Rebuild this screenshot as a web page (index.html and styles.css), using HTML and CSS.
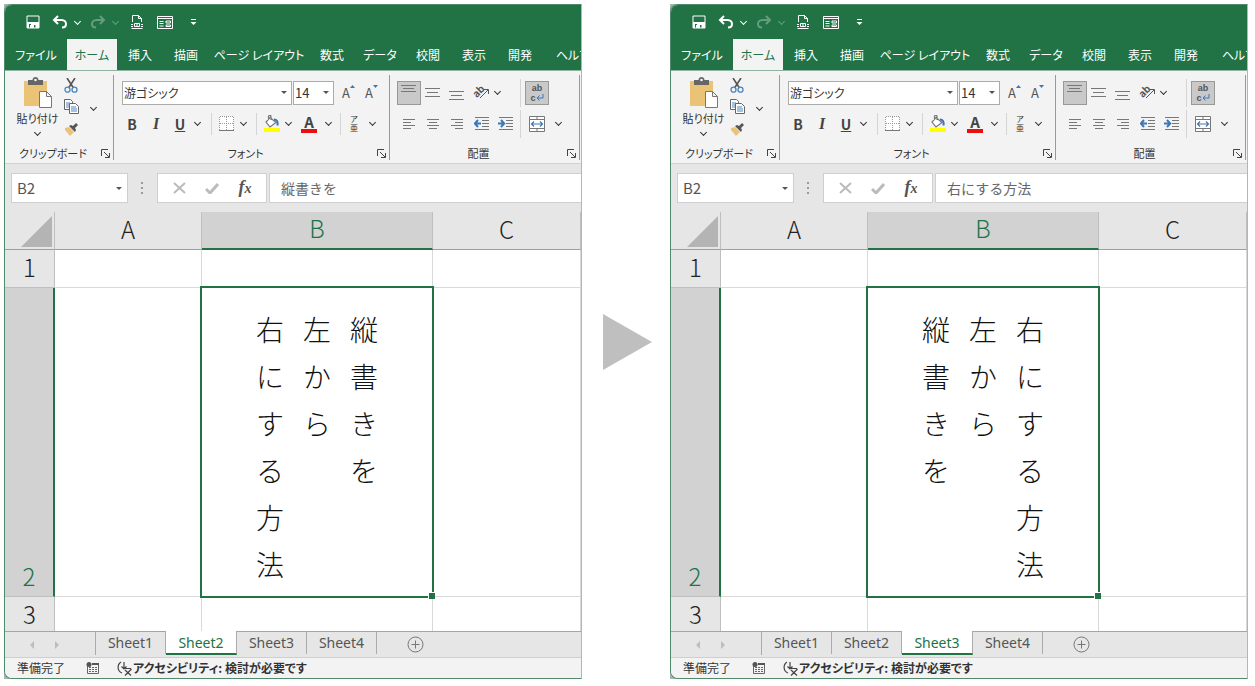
FILE: index.html
```
<!DOCTYPE html>
<html lang="ja">
<head>
    <meta charset="UTF-8">
    <title>縦書きを左から右にする方法</title>
    <link rel="stylesheet" href="styles.css">
</head>
<body>
    <main class="compare">
        <section class="shot" data-sheet="Sheet2" data-lines="縦書きを,左から,右にする方法"></section>
        <svg class="arrow" viewBox="0 0 50 56"><path d="M1 0L50 28L1 56z"/></svg>
        <section class="shot" data-sheet="Sheet3" data-lines="右にする方法,左から,縦書きを"></section>
    </main>

    <template id="excel">
        <div class="window">
            <header class="title-bar">
                <button class="icon-btn" aria-label="上書き保存"><svg width="14" height="14" viewBox="0 0 14 14"><path class="w" d="M1 1h12v12H1z"/><path class="wf" d="M1 7h12v6H9.500v-3H8v3H4v-3h1V9H3v4H1z"/></svg></button>
                <button class="icon-btn undo" aria-label="元に戻す"><svg width="16" height="14" viewBox="0 0 16 14"><path class="w bold" d="M6 1L2 5l4 4M2 5h7.500c3 0 4.500 2 4.500 4 0 2-1.500 3.500-4 3.500"/></svg></button>
                <button class="chev light" aria-label="元に戻すの一覧"></button>
                <button class="icon-btn redo dim" aria-label="やり直し"><svg width="16" height="14" viewBox="0 0 16 14"><path class="w bold" d="M10 1l4 4-4 4M14 5H6.500C3.500 5 2 7 2 9c0 2 1.500 3.500 4 3.500"/></svg></button>
                <button class="chev light dim" aria-label="やり直しの一覧"></button>
                <button class="icon-btn" aria-label="印刷プレビュー"><svg width="14" height="16" viewBox="0 0 14 16"><path class="w" d="M2.500 8V1.500h6l3 3V8M8.500 1.500v3h3M1.500 14.500h11"/><path class="w" d="M1 10.500h2M11 10.500h2M4.500 9.500h5v3h-5z"/><path class="wf" d="M1 12h2v1H1zM11 12h2v1h-2zM6 10.500h2v1H6z"/></svg></button>
                <button class="icon-btn" aria-label="フォーム"><svg width="16" height="13" viewBox="0 0 16 13"><path class="w" d="M.5.5h15v12H.5zM.5 2.500h15M2.500 5.500h4M2.500 7.500h4M2.500 10h4M9 5h4.500v2H9zM9 9h4.500v1.500H9z"/></svg></button>
                <button class="icon-btn" aria-label="クイック アクセスのカスタマイズ"><svg width="7" height="7" viewBox="0 0 7 7"><path class="wf" d="M1 0h5v1H1zM.5 3h6l-3 3z"/></svg></button>
            </header>

            <nav class="ribbon-tabs">
                <a href="#">ファイル</a>
                <a href="#" class="active">ホーム</a>
                <a href="#">挿入</a>
                <a href="#">描画</a>
                <a href="#">ページ レイアウト</a>
                <a href="#">数式</a>
                <a href="#">データ</a>
                <a href="#">校閲</a>
                <a href="#">表示</a>
                <a href="#">開発</a>
                <a href="#">ヘルプ</a>
            </nav>

            <div class="ribbon">
                <div class="group clipboard">
                    <div class="tools">
                        <button class="paste">
                            <svg width="28" height="32" viewBox="0 0 28 32"><path fill="#eac377" d="M0 4h23v25H0z"/><path fill="#666" d="M4 3h4.500c0-4 6-4 6 0H19v5H4z"/><circle cx="11.500" cy="3" r="1.300" fill="#f3f3f3"/><path fill="#fff" stroke="#777" d="M15.500 14.500h7l5 5v11h-12zM22.500 14.500v5h5"/></svg>
                            <span>貼り付け</span>
                            <i class="chev"></i>
                        </button>
                        <div class="clip-list">
                            <button class="icon-btn" aria-label="切り取り"><svg width="14" height="15" viewBox="0 0 14 15"><path fill="none" stroke="#555" stroke-width="1.600" d="M3 0l6.500 10M11 0L4.500 10"/><circle cx="3.500" cy="11.700" r="2.500" fill="none" stroke="#4a86bd" stroke-width="1.300"/><circle cx="10.500" cy="11.700" r="2.500" fill="none" stroke="#4a86bd" stroke-width="1.300"/></svg></button>
                            <button class="icon-btn" aria-label="コピー"><svg width="15" height="16" viewBox="0 0 15 16"><path fill="#fff" stroke="#666" d="M.5.5h6l2 2v8h-8z"/><path stroke="#4a86bd" d="M2 4h4M2 6h4M2 8h4"/><path fill="#fff" stroke="#666" d="M5.500 4.500h6l3 3v7h-9z"/><path stroke="#4a86bd" d="M7 8h5M7 10h6M7 12h6"/></svg></button>
                            <button class="icon-btn" aria-label="書式のコピー"><svg width="15" height="13" viewBox="0 0 15 13"><path fill="#eac377" d="M1 5l4-1 5 5-4 4-5-6z"/><path fill="#555" d="M5 3l2-1 2 1 3-3 2 2-3 3 1 2-1 2z"/></svg></button>
                        </div>
                        <button class="chev" aria-label="コピーのオプション"></button>
                    </div>
                    <div class="caption"><span>クリップボード</span><button class="launcher" aria-label="クリップボードの詳細"><svg width="9" height="9" viewBox="0 0 9 9"><path d="M.5 7V.5H7M3 3l5 5M8.500 4v4.500H4"/></svg></button></div>
                </div>

                <div class="group font">
                    <div class="tools">
                        <div class="row">
                            <span class="combo family"><select aria-label="フォント"><option>游ゴシック</option></select></span>
                            <span class="combo size"><select aria-label="フォント サイズ"><option>14</option></select></span>
                            <button class="resize first" aria-label="フォント サイズの拡大">A<svg width="5" height="3" viewBox="0 0 5 3"><path d="M0 3h5L2.500 0z"/></svg></button>
                            <button class="resize" aria-label="フォント サイズの縮小">A<svg width="5" height="3" viewBox="0 0 5 3"><path d="M0 0h5L2.500 3z"/></svg></button>
                        </div>
                        <div class="row styles">
                            <button class="letter"><b>B</b></button>
                            <button class="letter serif"><i>I</i></button>
                            <button class="letter"><b><u>U</u></b></button>
                            <button class="chev" aria-label="下線"></button>
                            <i class="line"></i>
                            <button class="icon-btn" aria-label="罫線"><svg width="15" height="15" viewBox="0 0 15 15"><path fill="#fff" stroke="#999" stroke-dasharray="1 1" d="M.5 14V.5h14V14M7.500 1v13M1 7.500h13"/><path stroke="#777" d="M0 14.500h15"/></svg></button>
                            <button class="chev" aria-label="罫線の種類"></button>
                            <i class="line"></i>
                            <button class="icon-btn" aria-label="塗りつぶしの色"><svg width="17" height="17" viewBox="0 0 17 17"><path fill="#fff" stroke="#777" stroke-width="1.200" d="M7 2.500l6 5-6 4.500-4-5zM5.500 5V1.500c0-1.500 2.500-1.500 2.500 0V5"/><path fill="none" stroke="#3c76b5" stroke-width="2" d="M11 4.500c3 0 4 2 3.500 6"/><path fill="#ffff00" d="M1 13h16v4H1z"/></svg></button>
                            <button class="chev" aria-label="塗りつぶしの色の一覧"></button>
                            <button class="letter color" aria-label="フォントの色"><b>A</b></button>
                            <button class="chev" aria-label="フォントの色の一覧"></button>
                            <i class="line"></i>
                            <button class="ruby"><span>ア</span><span>亜</span></button>
                            <button class="chev" aria-label="ふりがな"></button>
                        </div>
                    </div>
                    <div class="caption"><span>フォント</span><button class="launcher" aria-label="フォントの詳細"><svg width="9" height="9" viewBox="0 0 9 9"><path d="M.5 7V.5H7M3 3l5 5M8.500 4v4.500H4"/></svg></button></div>
                </div>

                <div class="group align">
                    <div class="tools">
                        <div class="row">
                            <button class="icon-btn pressed high" aria-label="上揃え"><svg width="16" height="16" viewBox="0 0 16 16"><path class="g" d="M0 .5h15M2 3.500h11M0 6.500h15"/></svg></button>
                            <button class="icon-btn" aria-label="上下中央揃え"><svg width="16" height="16" viewBox="0 0 16 16"><path class="g" d="M0 3.500h15M2 7.500h11M0 11.500h15"/></svg></button>
                            <button class="icon-btn" aria-label="下揃え"><svg width="16" height="16" viewBox="0 0 16 16"><path class="g" d="M0 6.500h15M2 10.500h11M0 14.500h15"/></svg></button>
                            <button class="orient" aria-label="方向"><span>ab</span><svg width="12" height="12" viewBox="0 0 12 12"><path d="M2 11l8-8M6 2.500h4.500V7"/></svg></button>
                            <button class="chev" aria-label="方向の一覧"></button>
                            <i class="line"></i>
                            <button class="wrap pressed"><span>ab</span><span>c<svg width="8" height="7" viewBox="0 0 8 7"><path d="M7 0v4H1M3.500 1.500L1 4l2.500 2.500"/></svg></span></button>
                        </div>
                        <div class="row">
                            <button class="icon-btn" aria-label="左揃え"><svg width="12" height="10" viewBox="0 0 12 10"><path class="g" d="M0 .5h12M0 3.500h8M0 6.500h12M0 9.500h8"/></svg></button>
                            <button class="icon-btn" aria-label="中央揃え"><svg width="12" height="10" viewBox="0 0 12 10"><path class="g" d="M0 .5h12M2 3.500h8M0 6.500h12M2 9.500h8"/></svg></button>
                            <button class="icon-btn" aria-label="右揃え"><svg width="12" height="10" viewBox="0 0 12 10"><path class="g" d="M0 .5h12M4 3.500h8M0 6.500h12M4 9.500h8"/></svg></button>
                            <button class="icon-btn" aria-label="インデントを減らす"><svg width="15" height="13" viewBox="0 0 15 13"><path class="g" d="M1 .5h14M8 3.500h7M8 6.500h7M8 9.500h7M1 12.500h14"/><path class="blue" d="M7 6.500H1M4 3L.8 6.500 4 10"/></svg></button>
                            <button class="icon-btn" aria-label="インデントを増やす"><svg width="15" height="13" viewBox="0 0 15 13"><path class="g" d="M1 .5h14M8 3.500h7M8 6.500h7M8 9.500h7M1 12.500h14"/><path class="blue" d="M0 6.500h6M3 3l3.200 3.500L3 10"/></svg></button>
                            <i class="line"></i>
                            <button class="icon-btn" aria-label="セルを結合して中央揃え"><svg width="16" height="16" viewBox="0 0 16 16"><path fill="#fff" stroke="#777" d="M.5.5h15v15H.5zM.5 3.500h15M.5 12.500h15M8 .5v3M8 12.500v3"/><path fill="none" stroke="#3c76b5" stroke-width="1.200" d="M2.500 8h11M5 5.500L2.500 8 5 10.500M11 5.500L13.500 8 11 10.500"/></svg></button>
                            <button class="chev" aria-label="結合の種類"></button>
                        </div>
                    </div>
                    <div class="caption"><span>配置</span><button class="launcher" aria-label="配置の詳細"><svg width="9" height="9" viewBox="0 0 9 9"><path d="M.5 7V.5H7M3 3l5 5M8.500 4v4.500H4"/></svg></button></div>
                </div>
            </div>

            <div class="formula-bar">
                <span class="combo name-box"><select aria-label="名前ボックス"><option>B2</option></select></span>
                <svg class="dots" width="2" height="12" viewBox="0 0 2 12"><path d="M0 0h2v2H0zM0 5h2v2H0zM0 10h2v2H0z"/></svg>
                <div class="fx">
                    <button class="icon-btn" aria-label="キャンセル"><svg width="13" height="12" viewBox="0 0 13 12"><path class="off" d="M1 1l11 10M12 1L1 11"/></svg></button>
                    <button class="icon-btn" aria-label="入力"><svg width="14" height="11" viewBox="0 0 14 11"><path class="off thick" d="M1 6l4 4 8-9"/></svg></button>
                    <button class="fx-btn"><i>f<small>x</small></i></button>
                </div>
                <input class="formula" type="text" aria-label="数式バー">
            </div>

            <table class="grid">
                <colgroup><col class="c-head"><col class="c-a"><col class="c-b"><col></colgroup>
                <tr class="letters">
                    <th class="corner"><svg width="31" height="31" viewBox="0 0 31 31"><path d="M31 0v31H0z"/></svg></th>
                    <th>A</th><th class="on">B</th><th>C</th>
                </tr>
                <tr class="r1"><th>1</th><td></td><td></td><td></td></tr>
                <tr class="r2"><th class="on">2</th><td></td><td class="selected"><div class="stack"></div></td><td></td></tr>
                <tr class="r3"><th>3</th><td></td><td></td><td></td></tr>
            </table>

            <div class="sheet-bar">
                <button class="move" aria-label="前のシート"><svg width="4" height="8" viewBox="0 0 4 8"><path d="M4 0v8L0 4z"/></svg></button>
                <button class="move" aria-label="次のシート"><svg width="4" height="8" viewBox="0 0 4 8"><path d="M0 0v8l4-4z"/></svg></button>
                <div class="sheets">
                    <button>Sheet1</button>
                    <button>Sheet2</button>
                    <button>Sheet3</button>
                    <button>Sheet4</button>
                </div>
                <button class="add" aria-label="新しいシート"><svg width="17" height="17" viewBox="0 0 17 17"><circle cx="8.500" cy="8.500" r="7.500"/><path d="M8.500 4.500v8M4.500 8.500h8"/></svg></button>
            </div>

            <footer class="status-bar">
                <span>準備完了</span>
                <svg class="macro" width="13" height="12" viewBox="0 0 13 12"><path fill="none" stroke="#666" d="M1.500 4v7.500h11v-9H6"/><circle cx="3" cy="2.500" r="2.500" fill="#555"/><path fill="#555" d="M6 1h7v2H6z"/><path stroke="#666" stroke-dasharray="2 1" d="M3 5.500h8M3 7.500h8M3 9.500h8"/></svg>
                <button class="access"><svg width="16" height="15" viewBox="0 0 16 15"><path fill="none" stroke="#444" stroke-width="1.200" d="M4 1C0 3.500 0 10 5 12M7 1v7M4.500 5.500L7 8l2.500-2.500M8 7.500h6M8 9l6 5.500M14.500 8L8 14.500"/></svg>アクセシビリティ: 検討が必要です</button>
            </footer>
        </div>
    </template>

    <script>
        const template = document.getElementById('excel');

        document.querySelectorAll('.shot').forEach(shot => {
            const lines = shot.dataset.lines.split(',');
            shot.appendChild(template.content.cloneNode(true));
            shot.querySelector('.formula').value = lines[0];

            // 1行ずつ縦に積んで右から並べる
            lines.forEach(line => {
                const p = document.createElement('p');
                p.textContent = line;
                shot.querySelector('.stack').appendChild(p);
            });

            shot.querySelectorAll('.sheets button').forEach(btn => {
                btn.classList.toggle('active', btn.textContent === shot.dataset.sheet);
            });
        });
    </script>
</body>
</html>
```
FILE: styles.css
```
* {
    box-sizing: border-box;
}

body {
    margin: 0;
    padding: 4px 7px 7px 4px;
    background: #fff;
    color: #333;
    font-family: "Noto Sans CJK JP", sans-serif;
    font-size: 12px;
    line-height: 16px;
    font-feature-settings: "palt";
}

button, select, input {
    margin: 0;
    padding: 0;
    border: none;
    background: none;
    color: inherit;
    font: inherit;
    font-feature-settings: inherit;
}

svg {
    display: block;
    flex: none;
}

.compare {
    display: grid;
    grid-template-columns: 1fr 88px 1fr;
    align-items: center;
}

.arrow {
    width: 50px;
    height: 56px;
    margin-left: 20px;
    fill: #bfbfbf;
}

.shot {
    min-width: 0;
    background: #a5b5ae;
}

.window {
    overflow: hidden;
    border: 1px solid #4f8a6b;
    border-right-color: #b5b5b5;
    border-radius: 8px 0 0 8px;
    background: #e6e6e6;
}

.icon-btn {
    display: flex;
    align-items: center;
    justify-content: center;
    width: 24px;
    height: 24px;
}

.chev {
    display: flex;
    align-items: center;
    justify-content: center;
    width: 12px;
    height: 24px;
}

.chev::before {
    content: "";
    flex: none;
    width: 4px;
    height: 4px;
    margin-top: -2px;
    border: solid #333;
    border-width: 0 1px 1px 0;
    transform: rotate(45deg);
}

.light::before {
    border-color: #fff;
}

.dim {
    opacity: 0.3;
}

/* タイトルバー */
.title-bar {
    display: flex;
    align-items: center;
    height: 34px;
    padding-left: 14px;
    background: #217346;
}

.title-bar .icon-btn {
    width: 28px;
}

.title-bar .undo {
    width: 26px;
}

.title-bar .redo {
    margin-left: 4px;
    width: 26px;
}

.title-bar .chev {
    width: 8px;
}

.title-bar .chev.dim {
    margin-right: 4px;
}

.w {
    fill: none;
    stroke: #fff;
}

.bold {
    stroke-width: 2;
}

.wf {
    fill: #fff;
}

.ribbon-tabs {
    display: grid;
    grid-template-columns: 62px 50px 46px 46px 100px 46px 50px 46px 46px 46px 60px;
    height: 31px;
    background: #217346;
}

.ribbon-tabs a {
    color: #fff;
    line-height: 31px;
    text-align: center;
    text-decoration: none;
    white-space: nowrap;
}

.ribbon-tabs .active {
    background: #f3f3f3;
    color: #217346;
}

/* リボン */
.ribbon {
    display: flex;
    height: 94px;
    padding: 4px 0 3px;
    border-top: 1px solid #8fb3a0;
    border-bottom: 1px solid #d2d2d2;
    background: #f3f3f3;
}

.group {
    display: flex;
    flex-direction: column;
    border-right: 1px solid #999;
}

.clipboard {
    width: 109px;
}

.font {
    width: 276px;
}

.align {
    width: 190px;
}

.tools {
    height: 72px;
}

.caption {
    display: flex;
    align-items: center;
    height: 14px;
    padding-right: 3px;
}

.caption span {
    flex: 1;
    font-size: 11px;
    line-height: 14px;
    text-align: center;
    white-space: nowrap;
}

.launcher path {
    fill: none;
    stroke: #444;
}

.clipboard .tools {
    display: flex;
    padding-left: 8px;
}

.paste {
    display: flex;
    flex-direction: column;
    align-items: center;
    width: 49px;
    padding-top: 2px;
    font-size: 11px;
    white-space: nowrap;
}

.paste span {
    line-height: 18px;
}

.paste .chev {
    height: 12px;
}

.clip-list {
    display: grid;
    grid-template-rows: repeat(3, 22px);
    width: 18px;
}

.clip-list .icon-btn {
    width: 18px;
    height: 20px;
}

.clipboard .tools > .chev {
    width: 26px;
    height: 66px;
}

.font .tools, .align .tools {
    display: grid;
    align-content: start;
    gap: 6px;
    padding: 5px 0 0 8px;
}

.align .tools {
    padding-left: 7px;
}

.row {
    display: flex;
    align-items: center;
    height: 25px;
}

.combo {
    display: flex;
    align-items: center;
    height: 24px;
    padding-right: 4px;
    border: 1px solid #ababab;
    background: #fff;
}

.combo::after {
    content: "";
    border: 3px solid transparent;
    border-top-color: #555;
    border-bottom: none;
}

.combo select {
    flex: 1;
    min-width: 0;
    height: 22px;
    padding-left: 1px;
    appearance: none;
}

.family {
    width: 170px;
    margin-right: 1px;
}

.size {
    width: 41px;
    font-size: 13px;
}

.resize {
    display: flex;
    align-items: flex-start;
    justify-content: center;
    width: 23px;
    color: #555;
    font-size: 13px;
}

.first {
    margin-left: 3px;
}

.resize svg {
    fill: #3c76b5;
}

.styles {
    display: grid;
    grid-template-columns: 20px 28px 20px 14px 14px 16px 18px 8px 22px 12px 30px 8px 16px 12px 24px;
    justify-items: center;
}

.line {
    width: 1px;
    height: 22px;
    background: #d5d5d5;
}

.letter {
    font-size: 14px;
    color: #444;
}

.serif {
    font-family: "Liberation Serif", serif;
    font-size: 16px;
    font-weight: bold;
}

.color {
    width: 16px;
    border-bottom: 4px solid #e81010;
    font-size: 15px;
    line-height: 14px;
}

.ruby {
    display: grid;
    justify-items: center;
    font-family: "Liberation Sans", "Noto Sans CJK JP", sans-serif;
    font-size: 8px;
    line-height: 9px;
}

.pressed {
    border: 1px solid #999;
    background: #c9c9c9;
}

.g {
    fill: none;
    stroke: #777;
}

.blue {
    fill: none;
    stroke: #3c76b5;
    stroke-width: 2;
}

.high {
    align-items: flex-start;
    padding-top: 3px;
}

.orient {
    display: flex;
    align-items: center;
    justify-content: center;
    width: 24px;
    color: #555;
    font-size: 10px;
    font-weight: bold;
}

.orient span {
    margin: -4px -6px 0 0;
    transform: rotate(-45deg);
}

.orient path {
    fill: none;
    stroke: #555;
}

.align .chev {
    width: 8px;
}

.align .line {
    height: 28px;
    margin: 0 4px 0 19px;
}

.wrap {
    display: grid;
    align-content: center;
    justify-items: center;
    width: 24px;
    height: 24px;
    font-family: "Liberation Sans", sans-serif;
    font-size: 9px;
    font-weight: bold;
    line-height: 10px;
    color: #555;
}

.wrap span {
    display: flex;
    align-items: center;
}

.wrap path {
    fill: none;
    stroke: #3c76b5;
}

.align .icon-btn + .line {
    margin-left: 3px;
}

.align .line + .icon-btn + .chev {
    margin-left: 5px;
}

/* 数式バー */
.formula-bar {
    display: flex;
    align-items: center;
    height: 48px;
    padding-left: 6px;
}

.name-box, .fx, .formula {
    height: 30px;
    border: 1px solid #cfcfcf;
    background: #fff;
}

.name-box {
    width: 117px;
    padding-right: 5px;
    font-size: 15px;
    color: #555;
}

.name-box select {
    height: 28px;
    padding-left: 5px;
}

.dots {
    margin: 0 14px 0 13px;
    fill: #999;
}

.fx {
    display: flex;
    align-items: center;
    justify-content: space-evenly;
    width: 110px;
    margin-right: 2px;
}

.off {
    fill: none;
    stroke: #bbb;
    stroke-width: 2;
}

.thick {
    stroke-width: 3;
}

.fx-btn {
    width: 24px;
    font-family: "Liberation Serif", serif;
    font-size: 18px;
    font-weight: bold;
    color: #555;
}

.fx-btn small {
    font-size: 14px;
}

.formula {
    flex: 1;
    min-width: 0;
    padding-left: 11px;
    border-right: none;
    font-size: 14px;
    font-feature-settings: normal;
    color: #666;
}

/* シート */
.grid {
    width: 100%;
    table-layout: fixed;
    border-spacing: 0;
    background: #fff;
    color: #222;
    font-size: 24px;
    line-height: 32px;
}

.c-head {
    width: 50px;
}

.c-a {
    width: 147px;
}

.c-b {
    width: 231px;
}

.grid th {
    padding: 0 0 4px;
    border-right: 1px solid #bfbfbf;
    background: #e6e6e6;
    font-weight: 300;
}

.grid td {
    padding: 0;
    border-right: 1px solid #d9d9d9;
    border-bottom: 1px solid #d9d9d9;
}

.letters th {
    height: 38px;
    border-bottom: 1px solid #9f9f9f;
}

.letters .on {
    border-bottom: 2px solid #217346;
    background: #d2d2d2;
    color: #217346;
}

.grid .corner {
    padding: 4px 0 0 16px;
    vertical-align: top;
}

.corner svg {
    fill: #b4b4b4;
}

.r1 th, .r2 th {
    border-bottom: 1px solid #bfbfbf;
}

.r1 th {
    height: 38px;
}

.r2 th {
    height: 309px;
    vertical-align: bottom;
}

.r2 .on {
    border-right: 2px solid #217346;
    background: #d2d2d2;
    color: #217346;
}

.r3 th {
    height: 34px;
    padding-bottom: 0;
}

.r3 td {
    border-bottom: none;
}

.grid .selected {
    position: relative;
    vertical-align: bottom;
}

.selected::before {
    content: "";
    position: absolute;
    inset: -2px;
    border: 2px solid #217346;
}

.selected::after {
    content: "";
    position: absolute;
    right: -3px;
    bottom: -3px;
    width: 6px;
    height: 6px;
    border: solid #fff;
    border-width: 1px 0 0 1px;
    background: #217346;
}

.stack {
    display: flex;
    flex-direction: row-reverse;
    justify-content: center;
    gap: 19px;
    height: 290px;
    font-size: 28px;
    font-weight: 300;
    font-feature-settings: normal;
    line-height: 47px;
    color: #111;
}

.stack p {
    width: 28px;
    margin: 0;
    line-break: anywhere;
}

.sheet-bar {
    display: flex;
    align-items: flex-start;
    height: 26px;
    padding-left: 14px;
    border-top: 1px solid #9fa8a3;
    color: #555;
}

.move {
    display: flex;
    align-items: center;
    justify-content: center;
    width: 25px;
    height: 25px;
}

.move path {
    fill: #bdbdbd;
}

.sheets {
    display: flex;
    margin: 0 30px 0 26px;
    border-left: 1px solid #ababab;
    font-family: "Noto Sans", sans-serif;
    font-size: 14px;
}

.sheets button {
    width: 70px;
    height: 22px;
    border-right: 1px solid #ababab;
}

.sheets .active {
    margin-top: -1px;
    padding-top: 2px;
    width: 71px;
    height: 24px;
    border-bottom: 2px solid #217346;
    background: #fff;
    color: #217346;
}

.add {
    height: 25px;
}

.add svg {
    fill: none;
    stroke: #777;
}

.status-bar {
    display: flex;
    align-items: center;
    height: 21px;
    padding-left: 12px;
    border-top: 1px solid #cfcfcf;
    background: #f3f3f3;
}

.macro {
    margin: 0 18px 0 21px;
}

.access {
    display: flex;
    align-items: center;
    font-weight: bold;
    white-space: nowrap;
}
```
